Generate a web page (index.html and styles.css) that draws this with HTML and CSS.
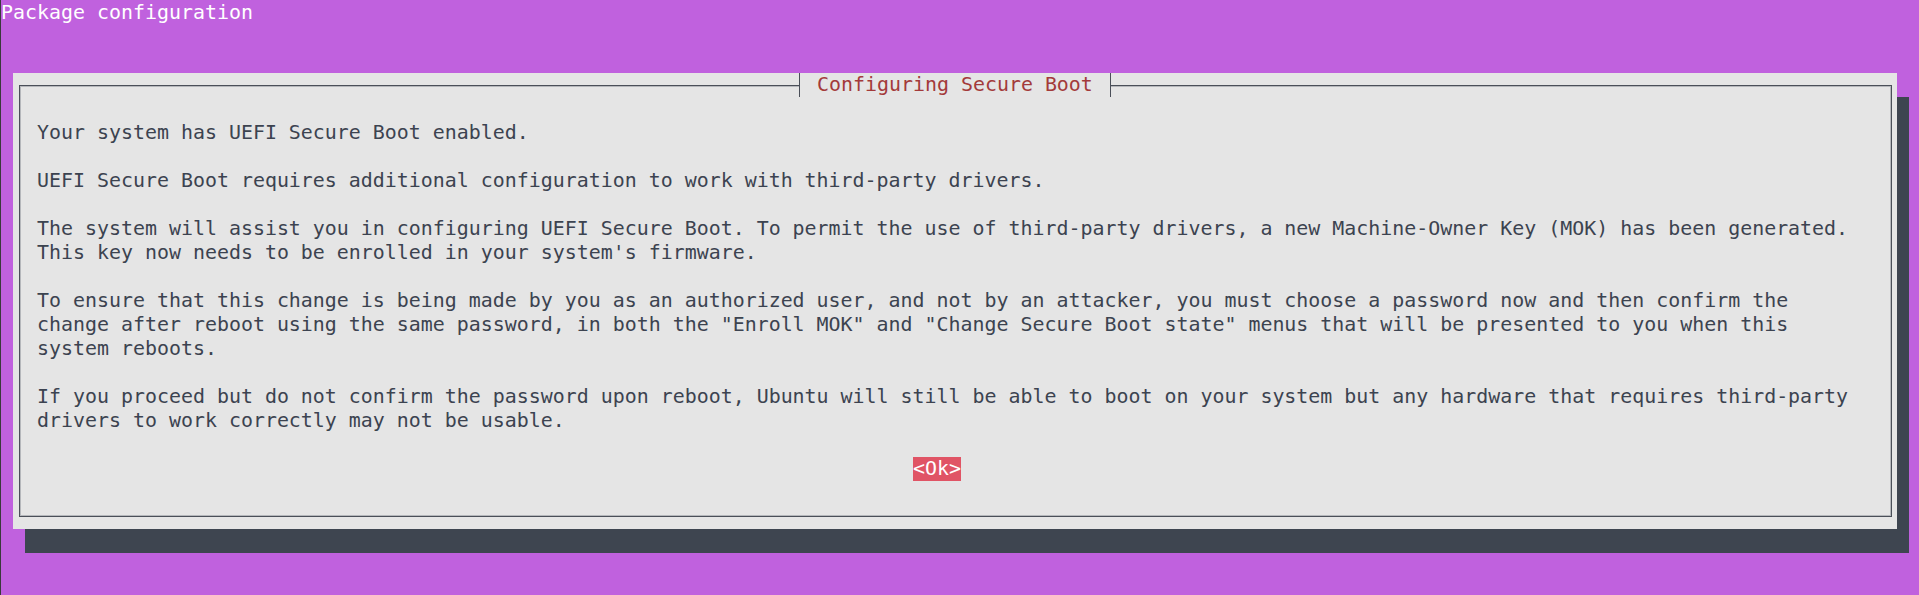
FILE: index.html
```html
<!DOCTYPE html>
<html lang="en">
<head>
<meta charset="utf-8">
<title>Package configuration</title>
<link rel="stylesheet" href="styles.css">
</head>
<body>
<div class="term">
  <div class="header">Package configuration</div>
  <div class="dialog">
    <div class="frame">
      <div class="title"><span class="title-text"> Configuring Secure Boot </span></div>
      <div class="body">
        <p>Your system has UEFI Secure Boot enabled.</p>
        <p>UEFI Secure Boot requires additional configuration to work with third-party drivers.</p>
        <p>The system will assist you in configuring UEFI Secure Boot. To permit the use of third-party drivers, a new Machine-Owner Key (MOK) has been generated.
This key now needs to be enrolled in your system's firmware.</p>
        <p>To ensure that this change is being made by you as an authorized user, and not by an attacker, you must choose a password now and then confirm the
change after reboot using the same password, in both the "Enroll MOK" and "Change Secure Boot state" menus that will be presented to you when this
system reboots.</p>
        <p>If you proceed but do not confirm the password upon reboot, Ubuntu will still be able to boot on your system but any hardware that requires third-party
drivers to work correctly may not be usable.</p>
        <div class="buttons"><span class="btn">&lt;Ok&gt;</span></div>
      </div>
    </div>
  </div>
</div>
</body>
</html>
```
FILE: styles.css
```css
html, body {
  margin: 0;
  padding: 0;
}
body {
  width: 1919px;
  height: 595px;
  overflow: hidden;
  background: #c061de;
  box-sizing: border-box;
  border-left: 1px solid #3a3a3c;
  font-family: "DejaVu Sans Mono", "Liberation Mono", monospace;
  font-size: 19.93px;
  line-height: 24px;
}
.term {
  padding-top: 1px;
}
.header {
  height: 24px;
  color: #ffffff;
  white-space: pre;
}
.dialog {
  margin-top: 48px;
  margin-left: 12px;
  width: 1884px;
  height: 456px;
  box-sizing: border-box;
  padding: 12px 5px 12px 6px;
  background: #e5e5e5;
  box-shadow: 12px 24px 0 0 #3e4550;
}
.frame {
  position: relative;
  height: 432px;
  box-sizing: border-box;
  border: 1px solid #4a4f58;
  box-shadow: inset 0 0 0 1px #b5b7bb;
}
.title {
  position: absolute;
  top: -13px;
  left: 773px;
  height: 24px;
  display: flex;
  color: #a33a3a;
  white-space: pre;
}
.title::before,
.title::after {
  content: "";
  width: 12px;
  height: 24px;
}
.title::before {
  background: linear-gradient(to right, transparent 6px, #4a4f58 6px, #4a4f58 7px, #e5e5e5 7px);
}
.title::after {
  background: linear-gradient(to right, #e5e5e5 5px, #4a4f58 5px, #4a4f58 6px, transparent 6px);
}
.title-text {
  background: #e5e5e5;
  height: 24px;
}
.body {
  padding: 35px 0 0 17px;
  color: #3c4350;
}
.body p {
  margin: 0 0 24px;
  white-space: pre;
}
.buttons {
  height: 24px;
  padding-left: 876px;
}
.btn {
  display: inline-block;
  height: 24px;
  background: #e05465;
  color: #ffffff;
  white-space: pre;
}
```
